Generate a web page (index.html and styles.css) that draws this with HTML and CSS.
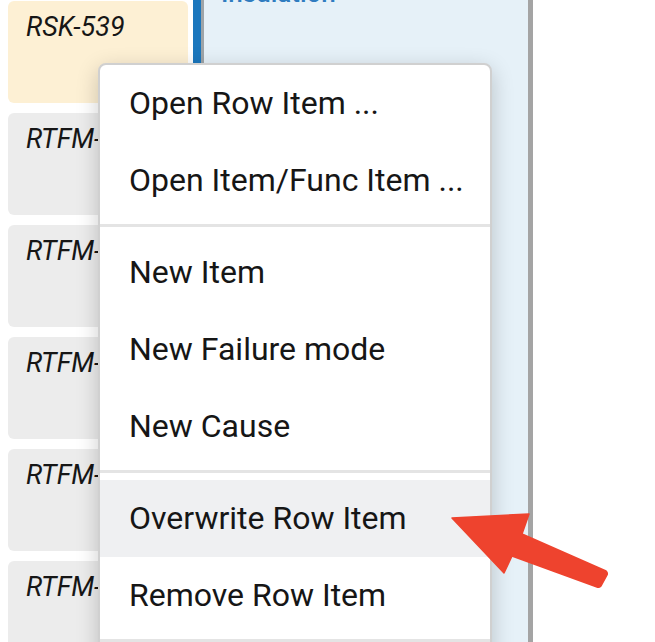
FILE: index.html
```html
<!DOCTYPE html>
<html lang="en">
<head>
<meta charset="utf-8">
<title>Context menu</title>
<link rel="stylesheet" href="styles.css">
</head>
<body>
<div class="page">
  <div class="cards">
    <div class="card card-risk">RSK-539</div>
    <div class="card">RTFM-</div>
    <div class="card">RTFM-</div>
    <div class="card">RTFM-</div>
    <div class="card">RTFM-</div>
    <div class="card">RTFM-</div>
  </div>
  <div class="lane">
    <div class="lane-bar"></div>
    <div class="lane-panel">
      <div class="lane-title">Insulation</div>
    </div>
  </div>
</div>

<div class="menu">
  <div class="menu-item">Open Row Item ...</div>
  <div class="menu-item">Open Item/Func Item ...</div>
  <div class="menu-sep"></div>
  <div class="menu-item">New Item</div>
  <div class="menu-item">New Failure mode</div>
  <div class="menu-item">New Cause</div>
  <div class="menu-sep"></div>
  <div class="menu-item menu-item-active">Overwrite Row Item</div>
  <div class="menu-item">Remove Row Item</div>
  <div class="menu-sep"></div>
</div>

<svg class="arrow" width="655" height="642" viewBox="0 0 655 642" xmlns="http://www.w3.org/2000/svg">
  <path d="M452 518 L529 514 L522 534 L606 571 Q608 573 607 575 L601 586 Q599 588 597 587 L512 556 L504 573 Z" fill="#ee432e" stroke="#ee432e" stroke-width="1.5" stroke-linejoin="round"/>
</svg>
</body>
</html>
```

FILE: styles.css
```css
* { box-sizing: border-box; }

html, body {
  margin: 0;
  padding: 0;
  background: #ffffff;
  font-family: Roboto, "Noto Sans", "Liberation Sans", sans-serif;
  overflow: hidden;
}

.page {
  display: flex;
  height: 642px;
  overflow: hidden;
}

.cards {
  width: 180px;
  margin-left: 8px;
  padding-top: 1px;
  display: flex;
  flex-direction: column;
  gap: 10px;
  flex-shrink: 0;
}

.card {
  height: 102px;
  flex-shrink: 0;
  border-radius: 6px;
  background: #ececec;
  padding: 11px 18px 0 18px;
  font-size: 27px;
  line-height: 30px;
  font-style: italic;
  color: #161616;
  white-space: nowrap;
  overflow: hidden;
}

.card-risk {
  background: #fdf0d4;
}

.lane {
  display: flex;
  margin-left: 5px;
  height: 642px;
  flex-shrink: 0;
}

.lane-bar {
  width: 8px;
  background: #1b77bd;
}

.lane-panel {
  width: 332px;
  background: #e6f1f8;
  border-left: 3px solid #9ea4a8;
  border-right: 5px solid #a4a4a4;
  padding-left: 17px;
  overflow: hidden;
}

.lane-title {
  font-size: 26px;
  line-height: 26px;
  font-weight: 500;
  color: #2f7cc0;
  margin-top: -20px;
}

.menu {
  position: absolute;
  left: 98px;
  top: 63px;
  width: 394px;
  height: 620px;
  background: #ffffff;
  border: 2px solid #d0d0d0;
  border-radius: 8px;
  box-shadow: 0 6px 22px rgba(0, 0, 0, 0.2);
  overflow: hidden;
}

.menu-item {
  height: 77px;
  line-height: 77px;
  padding-left: 29px;
  font-size: 32px;
  color: #161616;
  white-space: nowrap;
}

.menu-item-active {
  background: #eff0f2;
}

.menu-sep {
  height: 3px;
  background: #e4e4e4;
  margin: 5px 0 7px 0;
}

.arrow {
  position: absolute;
  left: 0;
  top: 0;
  pointer-events: none;
}
```
